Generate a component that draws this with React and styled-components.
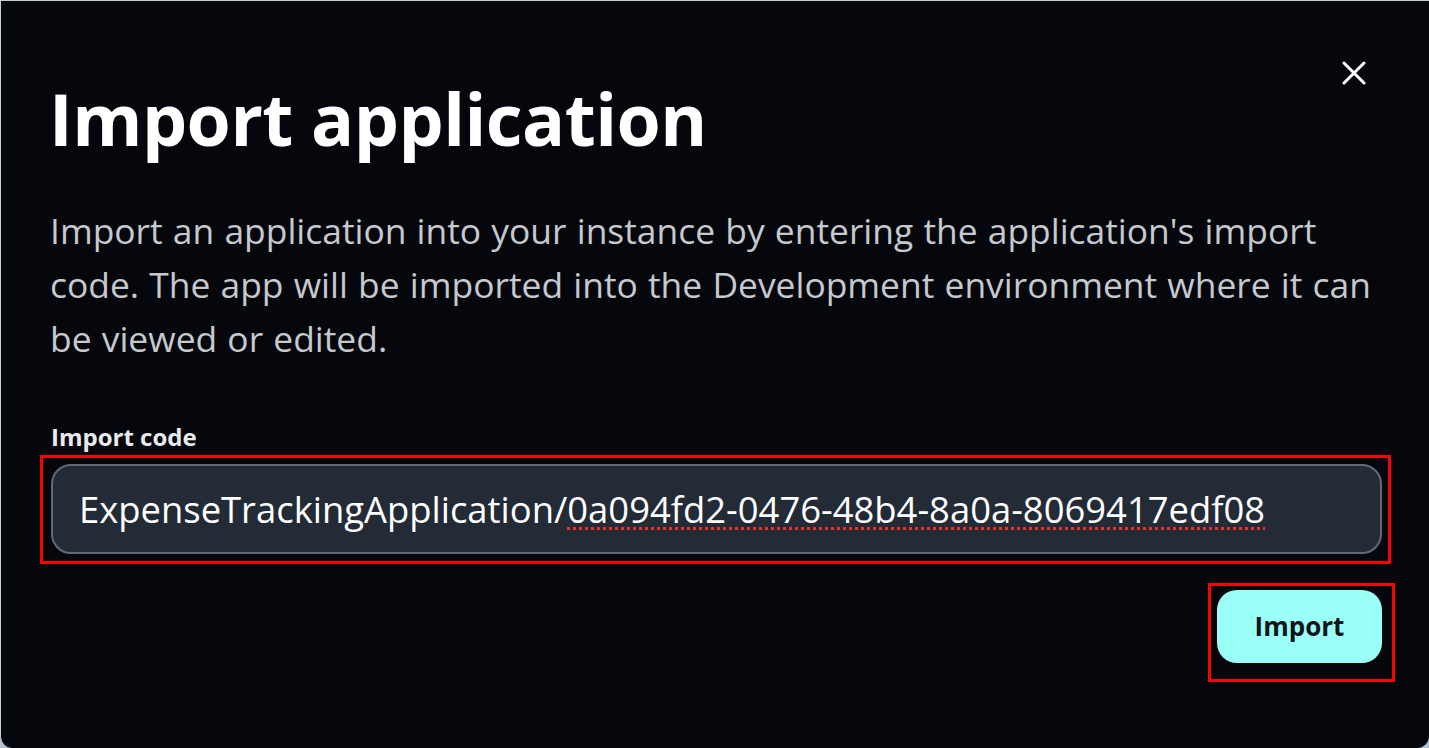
import React from "react";
import styled, { createGlobalStyle } from "styled-components";

const Global = createGlobalStyle`
  html, body {
    margin: 0;
    padding: 0;
    background: #b7c2d1;
  }
  body {
    font-family: "Open Sans", "Noto Sans", sans-serif;
  }
`;

const Dialog = styled.div`
  box-sizing: border-box;
  width: 1429px;
  height: 748px;
  background: #05070c;
  border-top: 1px solid #c9ccd1;
  border-left: 1px solid #c9ccd1;
  border-radius: 0 0 12px 12px;
  padding: 56px 47px 0 50px;
  display: flex;
  flex-direction: column;
  color: #ffffff;
`;

const Header = styled.div`
  display: flex;
  align-items: flex-start;
  justify-content: space-between;
`;

const Title = styled.h1`
  margin: 16px 0 0 -2px;
  font-size: 71.5px;
  font-weight: 700;
  line-height: 1.3;
  letter-spacing: -0.5px;
  color: #ffffff;
`;

const CloseButton = styled.button`
  margin: -2px 10px 0 0;
  width: 36px;
  height: 36px;
  padding: 0;
  border: none;
  background: none;
  display: flex;
  align-items: center;
  justify-content: center;
  cursor: pointer;
`;

const Description = styled.p`
  margin: 37px 0 0 -1px;
  max-width: 1345px;
  font-size: 35.4px;
  line-height: 54px;
  word-spacing: 1px;
  color: #c6c9ce;
`;

const Label = styled.label`
  margin-top: 55px;
  font-size: 24px;
  font-weight: 700;
  color: #e9ebed;
`;

const Highlight = styled.div`
  position: relative;
  &::after {
    content: "";
    position: absolute;
    top: ${p => p.$t}px;
    right: ${p => p.$r}px;
    bottom: ${p => p.$b}px;
    left: ${p => p.$l}px;
    border: 3px solid #ff0000;
    pointer-events: none;
  }
`;

const InputWrap = styled(Highlight)`
  margin-top: 11px;
`;

const Input = styled.div`
  box-sizing: border-box;
  height: 90px;
  border: 2px solid #5f6b7a;
  border-radius: 20px;
  background: #232b37;
  padding: 0 26px;
  display: flex;
  align-items: center;
  font-size: 36.4px;
  color: #ffffff;
  white-space: nowrap;
`;

/* spell-check squiggle drawn as a dotted strip under the code */
const Misspelled = styled.span`
  background-image: repeating-linear-gradient(to right, #ff2a1f 0 3px, transparent 3px 6px);
  background-size: 100% 3px;
  background-position: 0 calc(100% - 4px);
  background-repeat: no-repeat;
`;

const Footer = styled.div`
  margin-top: 36px;
  display: flex;
  justify-content: flex-end;
`;

const PrimaryButton = styled.button`
  box-sizing: border-box;
  width: 165px;
  height: 73px;
  border: none;
  border-radius: 20px;
  background: #99fff7;
  color: #0f141a;
  font-family: "Open Sans", "Noto Sans", sans-serif;
  font-size: 26px;
  font-weight: 700;
  cursor: pointer;
`;

export default function App() {
  return (
    <>
      <Global />
      <Dialog role="dialog" aria-labelledby="import-title">
        <Header>
          <Title id="import-title">Import application</Title>
          <CloseButton aria-label="Close">
            <svg width="24" height="24" viewBox="0 0 24 24" fill="none">
              <path d="M2 2 L22 22 M22 2 L2 22" stroke="#ffffff" strokeWidth="3" strokeLinecap="round" />
            </svg>
          </CloseButton>
        </Header>
        <Description>
          Import an application into your instance by entering the application's import code. The app will be imported into the Development environment where it can be viewed or edited.
        </Description>
        <Label>Import code</Label>
        <InputWrap $t={-9} $r={-9} $b={-10} $l={-11}>
          <Input>
            ExpenseTrackingApplication/<Misspelled>0a094fd2-0476-48b4-8a0a-8069417edf08</Misspelled>
          </Input>
        </InputWrap>
        <Footer>
          <Highlight $t={-7} $r={-13} $b={-19} $l={-9}>
            <PrimaryButton>Import</PrimaryButton>
          </Highlight>
        </Footer>
      </Dialog>
    </>
  );
}
